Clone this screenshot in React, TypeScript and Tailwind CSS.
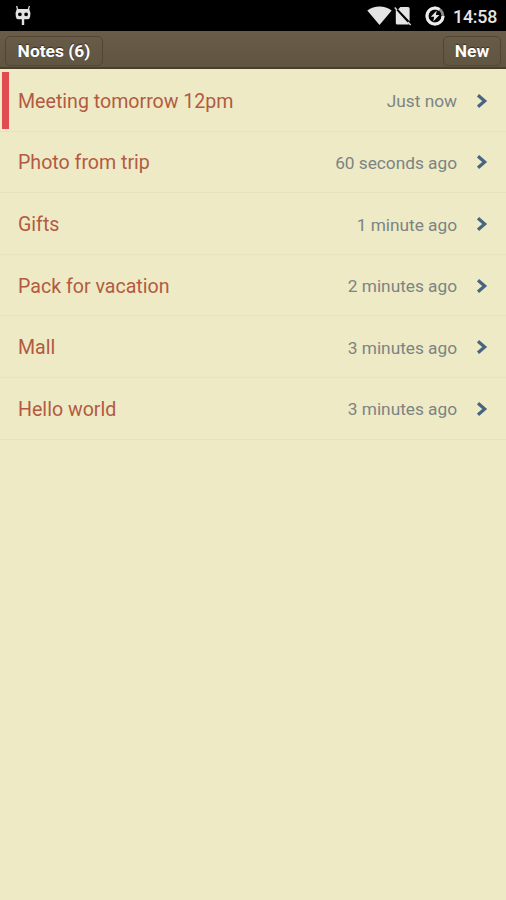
type Note = { title: string; age: string; selected?: boolean };

const notes: Note[] = [
  { title: "Meeting tomorrow 12pm", age: "Just now", selected: true },
  { title: "Photo from trip", age: "60 seconds ago" },
  { title: "Gifts", age: "1 minute ago" },
  { title: "Pack for vacation", age: "2 minutes ago" },
  { title: "Mall", age: "3 minutes ago" },
  { title: "Hello world", age: "3 minutes ago" },
];

function RobotIcon() {
  return (
    <svg width="18" height="21" viewBox="0 0 18 21" fill="none">
      <path d="M2.6 1 3.8 5M15.4 1 14.2 5" stroke="#d8d8d8" strokeWidth="1.3" />
      <path
        fillRule="evenodd"
        d="M2.8 4h12.4q1.8 3.7 1 7.4-.4 2.8-2.6 2.9h-3.4V20H7.8v-5.7H4.4q-2.2-.1-2.6-2.9-.8-3.7 1-7.4ZM4 9.3a1.9 1.9 0 1 0 3.8 0 1.9 1.9 0 0 0-3.8 0Zm6.2 0a1.9 1.9 0 1 0 3.8 0 1.9 1.9 0 0 0-3.8 0Z"
        fill="#e2e2e2"
      />
    </svg>
  );
}

function WifiIcon() {
  return (
    <svg width="25" height="20" viewBox="0 0 25 20">
      <path d="M.3 4.5C7.3-.7 17.7-.7 24.7 4.5L12.5 19Z" fill="#e4e4e4" />
    </svg>
  );
}

function NoSimIcon() {
  return (
    <svg width="18" height="20" viewBox="0 0 18 20">
      <path d="M6.4 1H14q1.6 0 1.6 1.6v12.6L4.2 3.2ZM1.8 3.6 15 18q-.4.6-1.2.6H3.4q-1.6 0-1.6-1.6Z" fill="#e4e4e4" />
      <path d="M.7 1.6 3 4M13.8 15.9l2.9 3.1" stroke="#d8d8d8" strokeWidth="1.4" />
    </svg>
  );
}

function BatteryIcon() {
  return (
    <svg width="20" height="20" viewBox="0 0 20 20" fill="none">
      <circle cx="10" cy="10" r="8" stroke="#8c8c8c" strokeWidth="2.8" />
      <path d="M14.5 3.4A8 8 0 1 0 18 10" stroke="#eee" strokeWidth="3" />
      <path d="m11.8 4.5-6 6.2h3.4l-1 4.8 6.2-6.5h-3.5Z" fill="#e4e4e4" />
    </svg>
  );
}

function StatusBar() {
  return (
    <div className="flex h-[31px] items-start bg-black text-[#e6e6e6]">
      <div className="pt-[5px] pl-[14px]"><RobotIcon /></div>
      <div className="ml-auto flex pt-[6px] pr-[9px]">
        <WifiIcon />
        <div className="ml-[2px]"><NoSimIcon /></div>
        <div className="ml-[13px]"><BatteryIcon /></div>
        <span className="ml-[8px] w-[44px] text-[17.8px] leading-[22px] font-medium tracking-[-0.2px] whitespace-nowrap">14:58</span>
      </div>
    </div>
  );
}

function Toolbar() {
  return (
    <header className="flex h-[38px] justify-between border-b-2 border-[#493f2b] bg-linear-to-b from-[#695d49] to-[#605541] px-[5px] pt-[5px] text-[17.4px] font-bold text-white">
      <button className="flex h-[30px] w-[98px] items-center justify-center rounded-[5px] border border-[#514633] [text-shadow:0_-1px_1px_#352d20]">Notes (6)</button>
      <button className="flex h-[30px] w-[58px] items-center justify-center rounded-[5px] border border-[#514633] [text-shadow:0_-1px_1px_#352d20]">New</button>
    </header>
  );
}

function NoteRow({ note }: { note: Note }) {
  return (
    <li className="flex h-[61.6px] items-center border-b border-[#e8e3bf] pr-[18px]">
      <span className={note.selected ? "ml-[2px] h-[57px] w-[7px] bg-[#e04c50]" : "ml-[2px] h-[57px] w-[7px]"} />
      <span className="mt-[2.4px] ml-[9px] text-[19.6px] text-[#b25b42]">{note.title}</span>
      <span className="mt-[4px] ml-auto text-[17.3px] tracking-[-0.02px] text-[#7c8484]">{note.age}</span>
      <svg className="mt-[1px] ml-[19px]" width="12" height="16" viewBox="0 0 12 16" fill="none">
        <path d="m2 2.2 6.7 5.8L2 13.8" stroke="#476480" strokeWidth="3.2" />
      </svg>
    </li>
  );
}

export default function App() {
  return (
    <main className="h-[900px] w-[506px] overflow-hidden bg-[#eeeac5] font-[Roboto,sans-serif]">
      <StatusBar />
      <Toolbar />
      <ul className="pt-[1px]">
        {notes.map((note) => <NoteRow key={note.title} note={note} />)}
      </ul>
    </main>
  );
}
